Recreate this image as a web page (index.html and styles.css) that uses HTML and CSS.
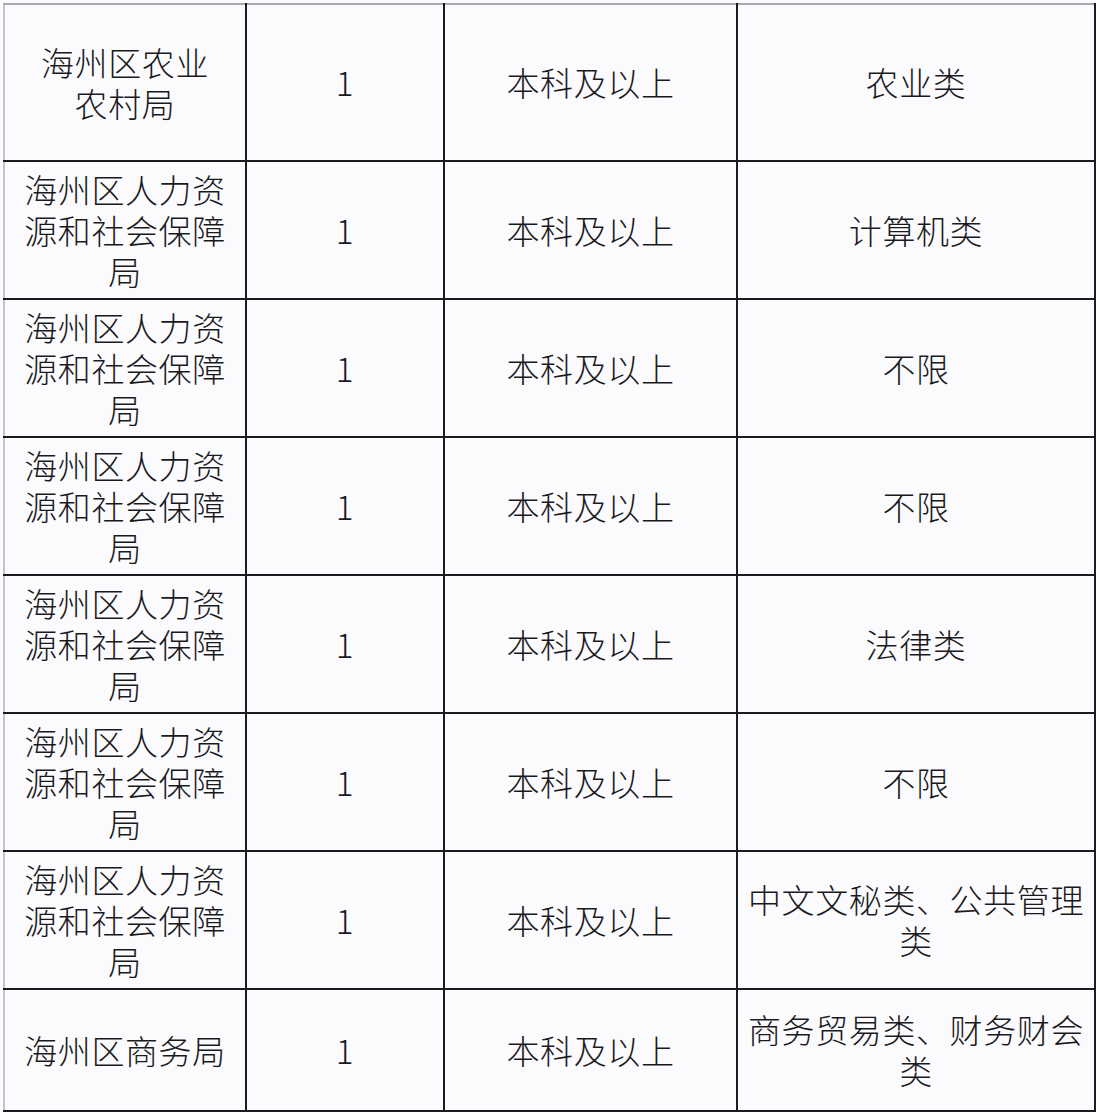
FILE: index.html
```html
<!DOCTYPE html>
<html lang="zh-CN">
<head>
<meta charset="utf-8">
<link rel="stylesheet" href="styles.css">
</head>
<body>
<table class="grid">
  <colgroup>
    <col class="c1"><col class="c2"><col class="c3"><col class="c4">
  </colgroup>
  <tr class="r-first">
    <td>海州区农业<br>农村局</td><td>1</td><td>本科及以上</td><td>农业类</td>
  </tr>
  <tr class="r-mid">
    <td>海州区人力资<br>源和社会保障<br>局</td><td>1</td><td>本科及以上</td><td>计算机类</td>
  </tr>
  <tr class="r-mid">
    <td>海州区人力资<br>源和社会保障<br>局</td><td>1</td><td>本科及以上</td><td>不限</td>
  </tr>
  <tr class="r-mid">
    <td>海州区人力资<br>源和社会保障<br>局</td><td>1</td><td>本科及以上</td><td>不限</td>
  </tr>
  <tr class="r-mid">
    <td>海州区人力资<br>源和社会保障<br>局</td><td>1</td><td>本科及以上</td><td>法律类</td>
  </tr>
  <tr class="r-mid">
    <td>海州区人力资<br>源和社会保障<br>局</td><td>1</td><td>本科及以上</td><td>不限</td>
  </tr>
  <tr class="r-mid">
    <td>海州区人力资<br>源和社会保障<br>局</td><td>1</td><td>本科及以上</td><td>中文文秘类、公共管理<br>类</td>
  </tr>
  <tr class="r-last">
    <td>海州区商务局</td><td>1</td><td>本科及以上</td><td>商务贸易类、财务财会<br>类</td>
  </tr>
</table>
</body>
</html>
```

FILE: styles.css
```css
html, body {
  margin: 0;
  padding: 0;
  background: #fbfbfd;
}
body {
  padding: 3px 0 0 3px;
}
.grid {
  border-collapse: collapse;
  table-layout: fixed;
  width: 1091px;
  font-family: "Noto Sans CJK SC", "Noto Sans", sans-serif;
  font-weight: 300;
  font-size: 33px;
  line-height: 41px;
  letter-spacing: 0.6px;
  color: #1a1a1e;
  background: #fbfbfd;
}
.c1 { width: 242px; }
.c2 { width: 198px; }
.c3 { width: 293px; }
.c4 { width: 358px; }
.grid td {
  border: 2px solid #1b1b1f;
  text-align: center;
  vertical-align: middle;
  padding: 0 1px;
}
.grid tr:first-child td {
  border-top-color: #a9aab0;
}
.grid td:first-child {
  border-left-color: #c4c5ca;
}
.r-first { height: 157px; }
.r-mid { height: 138px; }
.r-last { height: 122px; }
```
